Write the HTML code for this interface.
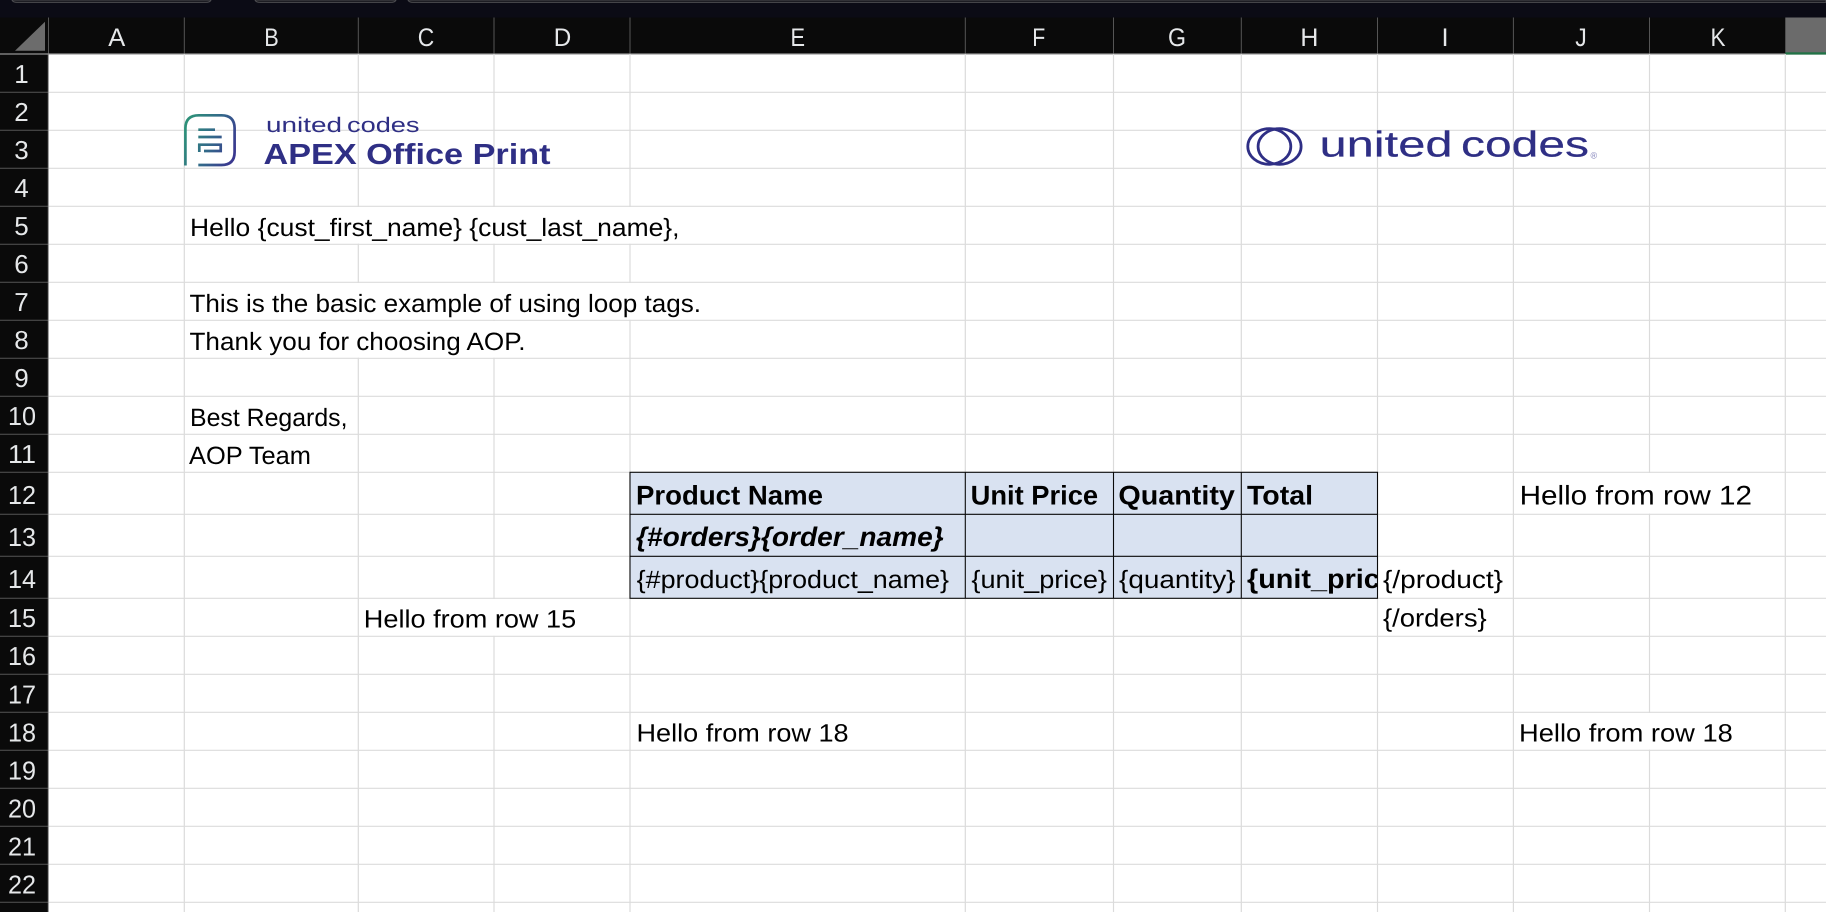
<!DOCTYPE html>
<html lang="en">
<head>
<meta charset="utf-8">
<title>Excel template</title>
<style>
html,body{margin:0;padding:0;width:1826px;height:912px;overflow:hidden;background:#fff}
svg{display:block;font-family:"Liberation Sans",sans-serif;text-rendering:geometricPrecision}
.hd{fill:#e6e8ea;font-size:25.5px;text-anchor:middle}
.rn{fill:#e6e8ea;font-size:26px;text-anchor:middle}
.t{fill:#000;font-size:25px}
.b{fill:#000;font-size:27px;font-weight:bold}
.lg{fill:#2f2f85}
</style>
</head>
<body>
<svg width="1826" height="912" viewBox="0 0 1826 912" xmlns="http://www.w3.org/2000/svg">
<defs>
<linearGradient id="g" gradientUnits="userSpaceOnUse" x1="185" y1="130" x2="235" y2="150">
<stop offset="0" stop-color="#2d9079"/><stop offset=".55" stop-color="#33668a"/><stop offset="1" stop-color="#3a388f"/>
</linearGradient>
<clipPath id="hcell"><rect x="1242" y="557" width="135" height="41"/></clipPath>
</defs>
<rect width="1826" height="912" fill="#fff"/>

<!-- top bar -->
<rect x="0" y="0" width="1826" height="18" fill="#0b0b15"/>
<path d="M12 0Q13 2.4 17 2.4H206Q210 2.4 211 0Z" fill="#16161c" stroke="#4c4c50" stroke-width="1"/>
<path d="M255 0Q256 2.4 260 2.4H391Q395 2.4 396 0Z" fill="#16161c" stroke="#4c4c50" stroke-width="1"/>
<path d="M408 0Q409 2.4 413 2.4H1826V0Z" fill="#16161c" stroke="#4c4c50" stroke-width="1"/>

<!-- headers -->
<rect x="0" y="17.5" width="1826" height="36.5" fill="#0a0a0a"/>
<rect x="0" y="54" width="48" height="858" fill="#0a0a0a"/>
<path d="M15 50.7L45 21.7V50.7Z" fill="#6c6c6c"/>
<g stroke="#555" stroke-width="1">
<path d="M48.5 17.5V54M184.3 17.5V54M358.3 17.5V54M494 17.5V54M630 17.5V54M965.3 17.5V54M1113.5 17.5V54M1241.3 17.5V54M1377.5 17.5V54M1513.4 17.5V54M1649.5 17.5V54"/>
<path d="M0 92.3H48M0 130.3H48M0 168.3H48M0 206.3H48M0 244.3H48M0 282.3H48M0 320.3H48M0 358.3H48M0 396.3H48M0 434.3H48M0 472.3H48M0 514.3H48M0 556.3H48M0 598.3H48M0 636.3H48M0 674.3H48M0 712.3H48M0 750.3H48M0 788.3H48M0 826.3H48M0 864.3H48M0 902.3H48"/>
</g>
<rect x="1785.3" y="17.5" width="41" height="35" fill="#6b6b6b"/>
<rect x="0" y="53.4" width="1826" height="1.2" fill="#9a9a9a"/>
<rect x="1785.3" y="52.3" width="41" height="2.3" fill="#217346"/>
<rect x="47.8" y="54" width="1" height="858" fill="#8a8a8a"/>

<g class="hd">
<text x="116.8" y="46" textLength="17" lengthAdjust="spacingAndGlyphs">A</text>
<text x="271.5" y="46" textLength="14.5" lengthAdjust="spacingAndGlyphs">B</text>
<text x="426" y="46" textLength="16.5" lengthAdjust="spacingAndGlyphs">C</text>
<text x="562.5" y="46" textLength="17.5" lengthAdjust="spacingAndGlyphs">D</text>
<text x="797.7" y="46" textLength="14.5" lengthAdjust="spacingAndGlyphs">E</text>
<text x="1038.7" y="46" textLength="13" lengthAdjust="spacingAndGlyphs">F</text>
<text x="1177" y="46" textLength="18" lengthAdjust="spacingAndGlyphs">G</text>
<text x="1309.4" y="46" textLength="18" lengthAdjust="spacingAndGlyphs">H</text>
<text x="1445" y="46">I</text>
<text x="1581" y="46" textLength="11.5" lengthAdjust="spacingAndGlyphs">J</text>
<text x="1718" y="46" textLength="15" lengthAdjust="spacingAndGlyphs">K</text>
</g>
<g class="rn">
<text x="21.5" y="83">1</text>
<text x="21.5" y="121">2</text>
<text x="21.5" y="159">3</text>
<text x="21.5" y="197">4</text>
<text x="21.5" y="235">5</text>
<text x="21.5" y="273">6</text>
<text x="21.5" y="311">7</text>
<text x="21.5" y="349">8</text>
<text x="21.5" y="387">9</text>
<text x="22" y="425" textLength="28" lengthAdjust="spacingAndGlyphs">10</text>
<text x="22" y="463" textLength="28" lengthAdjust="spacingAndGlyphs">11</text>
<text x="22" y="504" textLength="28" lengthAdjust="spacingAndGlyphs">12</text>
<text x="22" y="546" textLength="28" lengthAdjust="spacingAndGlyphs">13</text>
<text x="22" y="588" textLength="28" lengthAdjust="spacingAndGlyphs">14</text>
<text x="22" y="627" textLength="28" lengthAdjust="spacingAndGlyphs">15</text>
<text x="22" y="665" textLength="28" lengthAdjust="spacingAndGlyphs">16</text>
<text x="22" y="703.5" textLength="28" lengthAdjust="spacingAndGlyphs">17</text>
<text x="22" y="741.5" textLength="28" lengthAdjust="spacingAndGlyphs">18</text>
<text x="22" y="779.5" textLength="28" lengthAdjust="spacingAndGlyphs">19</text>
<text x="22" y="817.5" textLength="28" lengthAdjust="spacingAndGlyphs">20</text>
<text x="22" y="855.5" textLength="28" lengthAdjust="spacingAndGlyphs">21</text>
<text x="22" y="893.5" textLength="28" lengthAdjust="spacingAndGlyphs">22</text>
</g>

<!-- grid -->
<g stroke="#dbdbdb" stroke-width="1.2">
<path d="M184.3 54V912M358.3 54V912M494 54V912M630 54V912M965.3 54V912M1113.5 54V912M1241.3 54V912M1377.5 54V912M1513.4 54V912M1649.5 54V912M1785.3 54V912"/>
<path d="M49 92.3H1826M49 130.3H1826M49 168.3H1826M49 206.3H1826M49 244.3H1826M49 282.3H1826M49 320.3H1826M49 358.3H1826M49 396.3H1826M49 434.3H1826M49 472.3H1826M49 514.3H1826M49 556.3H1826M49 598.3H1826M49 636.3H1826M49 674.3H1826M49 712.3H1826M49 750.3H1826M49 788.3H1826M49 826.3H1826M49 864.3H1826M49 902.3H1826"/>
</g>
<!-- overflow text hides grid lines -->
<g fill="#fff">
<rect x="357" y="207" width="274" height="36.6"/>
<rect x="357" y="283" width="274" height="36.6"/>
<rect x="357" y="321" width="138" height="36.6"/>
<rect x="493" y="599" width="2" height="36.6"/>
<rect x="1648.5" y="473" width="2" height="40.6"/>
<rect x="1648.5" y="713" width="2" height="36.6"/>
</g>

<!-- table -->
<rect x="630" y="472.3" width="747.5" height="126" fill="#d9e2f1"/>
<g stroke="#0a0a0a" stroke-width="1.1" fill="none">
<rect x="630" y="472.3" width="747.5" height="126"/>
<path d="M630 514.3H1377.5M630 556.3H1377.5M965.3 472.3V598.3M1113.5 472.3V598.3M1241.3 472.3V598.3"/>
</g>

<!-- APEX logo -->
<g fill="none" stroke="url(#g)" stroke-width="2.7">
<path d="M185.4 165.5V128.5Q185.4 115.3 198.7 115.3H221.5Q234.6 115.3 234.6 128.5V152Q234.6 165 221.5 165H198.3"/>
<path d="M198.3 129.7H215M198.3 137H221.7"/>
<path d="M199.3 152V144.7H220.7V151H204"/>
</g>
<text class="lg" x="266" y="132" font-size="21" textLength="76" lengthAdjust="spacingAndGlyphs">united</text>
<text class="lg" x="347" y="132" font-size="21" textLength="72.5" lengthAdjust="spacingAndGlyphs">codes</text>
<text class="lg" x="263.5" y="164" font-size="29" font-weight="bold" textLength="287" lengthAdjust="spacingAndGlyphs">APEX Office Print</text>

<!-- united codes logo -->
<g fill="none" stroke="#2f2f85" stroke-width="2.8">
<ellipse cx="1269.3" cy="146.5" rx="21.5" ry="17.8"/>
<ellipse cx="1279.6" cy="146.5" rx="21.5" ry="17.8"/>
</g>
<text class="lg" x="1319.5" y="156.7" font-size="36" stroke="#2f2f85" stroke-width=".2" textLength="133" lengthAdjust="spacingAndGlyphs">united</text>
<text class="lg" x="1461" y="156.7" font-size="36" stroke="#2f2f85" stroke-width=".2" textLength="128" lengthAdjust="spacingAndGlyphs">codes</text>
<text x="1590.5" y="158.5" font-size="9" fill="#7f7fb8">®</text>

<!-- body text -->
<text class="t" x="190" y="236" textLength="489.5" lengthAdjust="spacingAndGlyphs">Hello {cust_first_name} {cust_last_name},</text>
<text class="t" x="189.5" y="312" textLength="511.5" lengthAdjust="spacingAndGlyphs">This is the basic example of using loop tags.</text>
<text class="t" x="189.5" y="350" textLength="336" lengthAdjust="spacingAndGlyphs">Thank you for choosing AOP.</text>
<text class="t" x="190" y="426" textLength="157.5" lengthAdjust="spacingAndGlyphs">Best Regards,</text>
<text class="t" x="189" y="464" textLength="122" lengthAdjust="spacingAndGlyphs">AOP Team</text>

<text class="b" x="636" y="504.3" textLength="187" lengthAdjust="spacingAndGlyphs">Product Name</text>
<text class="b" x="970.6" y="504.3" textLength="127.5" lengthAdjust="spacingAndGlyphs">Unit Price</text>
<text class="b" x="1118.4" y="504.3" textLength="116.5" lengthAdjust="spacingAndGlyphs">Quantity</text>
<text class="b" x="1247" y="504.3" textLength="66" lengthAdjust="spacingAndGlyphs">Total</text>
<text class="b" x="636" y="546" font-style="italic" textLength="307.7" lengthAdjust="spacingAndGlyphs">{#orders}{order_name}</text>
<text class="t" x="636.7" y="588" textLength="312.3" lengthAdjust="spacingAndGlyphs">{#product}{product_name}</text>
<text class="t" x="971.4" y="588" textLength="135.6" lengthAdjust="spacingAndGlyphs">{unit_price}</text>
<text class="t" x="1119" y="588" textLength="116.5" lengthAdjust="spacingAndGlyphs">{quantity}</text>
<g clip-path="url(#hcell)"><text class="b" x="1247" y="588" textLength="160" lengthAdjust="spacingAndGlyphs">{unit_price}</text></g>
<text class="t" x="1383" y="588" textLength="120" lengthAdjust="spacingAndGlyphs">{/product}</text>
<text class="t" x="1383" y="626.7" textLength="103.7" lengthAdjust="spacingAndGlyphs">{/orders}</text>

<text class="t" x="1519.6" y="504.3" style="font-size:27px" textLength="232.4" lengthAdjust="spacingAndGlyphs">Hello from row 12</text>
<text class="t" x="363.8" y="627.3" textLength="212.4" lengthAdjust="spacingAndGlyphs">Hello from row 15</text>
<text class="t" x="636.5" y="741.7" textLength="212.1" lengthAdjust="spacingAndGlyphs">Hello from row 18</text>
<text class="t" x="1519" y="741.7" textLength="213.8" lengthAdjust="spacingAndGlyphs">Hello from row 18</text>
</svg>
</body>
</html>
